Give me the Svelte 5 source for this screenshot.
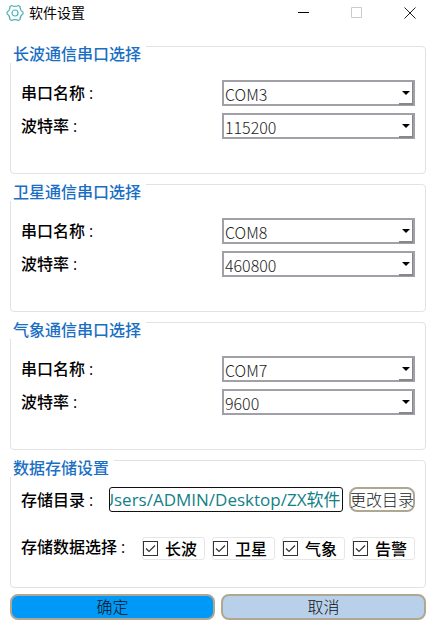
<script>
  import { onMount } from 'svelte';

  const ports = ['COM1', 'COM3', 'COM7', 'COM8'];
  const rates = ['9600', '115200', '460800'];

  let groups = $state([
    { id: 'longwave', title: '长波通信串口选择', port: 'COM3', rate: '115200' },
    { id: 'satellite', title: '卫星通信串口选择', port: 'COM8', rate: '460800' },
    { id: 'weather', title: '气象通信串口选择', port: 'COM7', rate: '9600' }
  ]);

  let kinds = $state([
    { name: '长波', on: true },
    { name: '卫星', on: true },
    { name: '气象', on: true },
    { name: '告警', on: true }
  ]);

  let path = $state('C:/Users/ADMIN/Desktop/ZX软件');
  let pathBox;

  // Keep the end of a long path in view
  onMount(() => {
    pathBox.scrollLeft = pathBox.scrollWidth;
  });
</script>

{#snippet combo(id, label, options, group, key)}
  <div class="row">
    <label for={id}>{label}<span class="colon">:</span></label>
    <div class="combo">
      <select {id} bind:value={group[key]}>
        {#each options as option}
          <option>{option}</option>
        {/each}
      </select>
      <span class="drop" aria-hidden="true">
        <svg width="8" height="4" viewBox="0 0 8 4"><path d="M0 0h8L4 4z" /></svg>
      </span>
    </div>
  </div>
{/snippet}

<div class="window">
  <header>
    <svg class="gear" width="18" height="18" viewBox="0 0 18 18" aria-hidden="true">
      <path d="M5.6 1.4Q9 3.4 12.4 1.4L14 2.5Q14 6.4 17 8.2V9.8Q14 11.6 14 15.5L12.4 16.6Q9 14.6 5.6 16.6L4 15.5Q4 11.6 1 9.8V8.2Q4 6.4 4 2.5Z" />
      <circle cx="9" cy="9" r="3" />
    </svg>
    <h1>软件设置</h1>
    <div class="controls">
      <button aria-label="最小化"><svg width="12" height="12" viewBox="0 0 12 12"><path d="M0 5.5h11" stroke="#000" /></svg></button>
      <button aria-label="最大化" disabled><svg width="12" height="12" viewBox="0 0 12 12"><path d="M.5 .5h10v10h-10z" stroke="#ccc" /></svg></button>
      <button aria-label="关闭"><svg width="12" height="12" viewBox="0 0 12 12"><path d="M.5 .5l11 11M11.500 .5l-11 11" stroke="#222" /></svg></button>
    </div>
  </header>

  <main>
    {#each groups as group (group.id)}
      <fieldset>
        <legend>{group.title}</legend>
        <div class="rows">
          {@render combo(`${group.id}-port`, '串口名称', ports, group, 'port')}
          {@render combo(`${group.id}-rate`, '波特率', rates, group, 'rate')}
        </div>
      </fieldset>
    {/each}

    <fieldset class="storage">
      <legend>数据存储设置</legend>
      <div class="rows">
        <div class="line">
          <label for="path">存储目录<span class="colon">:</span></label>
          <input id="path" class="path" type="text" bind:value={path} bind:this={pathBox} />
          <button class="change">更改目录</button>
        </div>
        <div class="line choices">
          <span class="caption">存储数据选择<span class="colon">:</span></span>
          <div class="kinds">
            {#each kinds as kind}
              <label class="kind"><input type="checkbox" bind:checked={kind.on} />
                <svg class="tick" width="15" height="15" viewBox="0 0 15 15" aria-hidden="true">
                  {#if kind.on}<path d="M3 7.500l3 3 6-6" />{/if}
                </svg>{kind.name}</label>
            {/each}
          </div>
        </div>
      </div>
    </fieldset>
  </main>

  <footer>
    <button class="ok">确定</button>
    <button class="cancel">取消</button>
  </footer>
</div>

<style>
  :global(body) {
    margin: 0;
    background: #fff;
  }

  .window,
  .window :is(button, input) {
    font-family: 'Open Sans', 'Noto Sans CJK SC', sans-serif;
    font-size: 16px;
  }

  .window {
    color: #000;
    line-height: 20px;
  }

  .window * {
    box-sizing: border-box;
  }

  header {
    display: flex;
    align-items: center;
    height: 26px;
    padding: 0 20px 0 6px;
  }

  .gear {
    fill: none;
    stroke: #4fb5b5;
    stroke-width: 1.2;
  }

  h1 {
    flex: 1;
    margin: 0 0 0 5px;
    font-size: 14px;
    font-weight: 400;
  }

  .controls {
    display: flex;
    gap: 41px;
  }

  .controls button {
    display: flex;
    padding: 0;
    border: 0;
    background: none;
  }

  .controls svg {
    fill: none;
  }

  main {
    display: flex;
    flex-direction: column;
    gap: 10px;
    padding: 20px 10px 6px;
  }

  fieldset {
    min-width: 0;
    margin: 0;
    padding: 0 0 34px;
    border: 1px solid #e2e2e2;
    border-radius: 4px;
  }

  legend {
    float: left;
    margin: -1px 0 0 -1px;
    padding: 0 5px 1px 3px;
    background: #fff;
    color: #1a6fc4;
    font-weight: 500;
    line-height: 16px;
  }

  .rows {
    display: flex;
    flex-direction: column;
    gap: 7px;
    clear: both;
    padding: 17px 10px 0;
  }

  .row {
    display: grid;
    grid-template-columns: 1fr 1fr;
    align-items: center;
    gap: 8px;
  }

  label,
  .caption {
    font-weight: 500;
  }

  .colon {
    margin-left: 4px;
    font-weight: 400;
  }

  .combo {
    position: relative;
  }

  .combo select {
    display: block;
    width: 100%;
    height: 26px;
    padding: 0 20px 2px 1px;
    appearance: none;
    border: 2px solid #a0a0a6;
    border-right-width: 3px;
    border-radius: 0;
    background: #fff;
    color: #222;
    font-family: 'Noto Sans CJK SC', sans-serif;
    font-size: 16px;
    font-weight: 300;
  }

  .drop {
    position: absolute;
    right: 2px;
    bottom: 1px;
    display: flex;
    align-items: center;
    justify-content: center;
    width: 14px;
    height: 23px;
    border-right: 1px solid #87878b;
    border-bottom: 2px solid #87878b;
    pointer-events: none;
  }

  .storage {
    padding-bottom: 27px;
  }

  .storage .rows {
    gap: 25px;
    padding-top: 10px;
  }

  .line {
    display: flex;
    align-items: center;
    justify-content: space-between;
  }

  .choices {
    align-items: flex-start;
  }

  .path {
    flex: 1;
    min-width: 0;
    height: 25px;
    margin: 0 6px 0 16px;
    padding: 0 2px 2px 0;
    border: 1px solid #111;
    border-radius: 3px;
    background: #fff;
    color: #128087;
  }

  .window .path {
    font-size: 17px;
  }

  .change {
    display: flex;
    align-items: center;
    justify-content: center;
    width: 66px;
    height: 25px;
    padding: 0;
    border: 2px solid #aea893;
    border-radius: 8px;
    background: #fff;
    color: #222;
    font-weight: 300;
    line-height: 20px;
    white-space: nowrap;
  }

  .kinds {
    display: flex;
    gap: 7px;
  }

  .kind {
    display: flex;
    align-items: center;
    width: 63px;
    height: 23px;
    border: 1px solid #e6e6e6;
    border-radius: 3px;
  }

  .kind input {
    width: 15px;
    height: 15px;
    margin: 0 -15px 0 0;
    appearance: none;
    border: 1px solid #333;
    background: #fff;
  }

  .tick {
    flex: none;
    margin-right: 7px;
    z-index: 1;
    fill: none;
    stroke: #333;
    stroke-width: 1.2;
    pointer-events: none;
  }

  footer {
    display: grid;
    grid-template-columns: 1fr 1fr;
    gap: 6px;
    padding: 0 10px 8px;
  }

  footer button {
    height: 26px;
    padding: 0;
    border: 2px solid #aea893;
    border-radius: 8px;
    color: #111;
    font-weight: 300;
    line-height: 20px;
  }

  .ok {
    background: #0099f8;
  }

  .cancel {
    background: #b9d0ea;
  }
</style>
